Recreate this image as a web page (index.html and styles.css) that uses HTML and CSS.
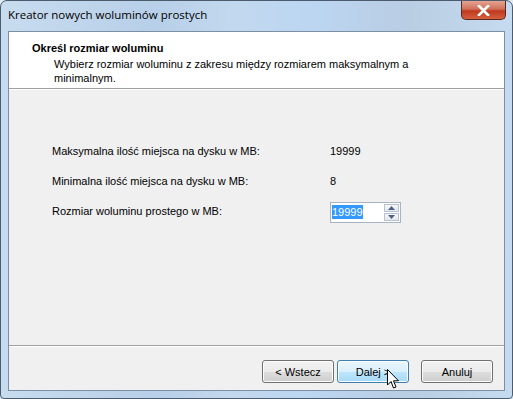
FILE: index.html
```html
<!DOCTYPE html>
<html lang="pl">
<head>
    <meta charset="UTF-8">
    <title>Kreator nowych woluminów prostych</title>
    <link rel="stylesheet" href="styles.css">
</head>
<body>
    <div class="window">
        <div class="titlebar">
            <span class="title">Kreator nowych woluminów prostych</span>
            <div class="close">
                <svg width="13" height="11" viewBox="0 0 13 11">
                    <path d="M2 1 L11 10 M11 1 L2 10" stroke="#fff" stroke-width="2.6" stroke-linecap="square"/>
                </svg>
            </div>
        </div>
        <div class="client">
            <div class="header">
                <div class="heading">Określ rozmiar woluminu</div>
                <div class="subheading">Wybierz rozmiar woluminu z zakresu między rozmiarem maksymalnym a minimalnym.</div>
            </div>
            <div class="content">
                <div class="row">
                    <span class="label">Maksymalna ilość miejsca na dysku w MB:</span>
                    <span class="value">19999</span>
                </div>
                <div class="row">
                    <span class="label">Minimalna ilość miejsca na dysku w MB:</span>
                    <span class="value">8</span>
                </div>
                <div class="row">
                    <span class="label">Rozmiar woluminu prostego w MB:</span>
                    <div class="spin">
                        <div class="spin-input"><span class="selected">19999</span></div>
                        <div class="spin-buttons">
                            <div class="spin-btn">
                                <svg width="7" height="4" viewBox="0 0 7 4"><path d="M0 4 L3.5 0 L7 4 Z" fill="#4d6185"/></svg>
                            </div>
                            <div class="spin-btn">
                                <svg width="7" height="4" viewBox="0 0 7 4"><path d="M0 0 L3.5 4 L7 0 Z" fill="#4d6185"/></svg>
                            </div>
                        </div>
                    </div>
                </div>
            </div>
            <div class="footer">
                <div class="btn">&lt; Wstecz</div>
                <div class="btn btn-hover">Dalej &gt;
                    <svg class="cursor" width="13" height="21" viewBox="0 0 13 21">
                        <path d="M0.5 0.5 L0.5 16 L4 12.5 L6.5 19 L9 18 L6.5 11.8 L11.5 11.8 Z" fill="#fff" stroke="#000" stroke-width="1"/>
                    </svg>
                </div>
                <div class="btn btn-cancel">Anuluj</div>
            </div>
        </div>
    </div>
</body>
</html>
```

FILE: styles.css
```css
body {
    margin: 0;
    padding: 0;
    background-color: #dfe9f3;
    font-family: 'Liberation Sans', Arial, sans-serif;
    font-size: 11px;
    color: #000;
}
.window {
    width: 511px;
    height: 397px;
    border: 1px solid #4d5c6d;
    border-radius: 7px 7px 4px 4px;
    background: linear-gradient(90deg, #c8dcef 0%, #b7cfe8 30%, #c2d8ee 45%, #bcd6f2 60%, #b9cde3 80%, #c6dbef 100%);
    display: flex;
    flex-direction: column;
    overflow: hidden;
}
.titlebar {
    height: 30px;
    display: flex;
    align-items: flex-start;
    justify-content: space-between;
    padding-left: 7px;
}
.title {
    font-family: 'Open Sans', sans-serif;
    font-size: 11.5px;
    margin-top: 6px;
    color: #000;
}
.close {
    width: 43px;
    height: 18px;
    margin-right: 6px;
    border: 1px solid #5a2a22;
    border-top: none;
    border-radius: 0 0 5px 5px;
    background: linear-gradient(180deg, #e5a493 0%, #d1705a 45%, #c0391f 55%, #d4603f 100%);
    display: flex;
    align-items: center;
    justify-content: center;
}
.client {
    flex: 1;
    margin: 0 7px 7px 7px;
    border: 1px solid #7d8fa3;
    background-color: #f0f0f0;
    display: flex;
    flex-direction: column;
}
.header {
    height: 57px;
    background-color: #fff;
    border-bottom: 1px solid #a0a0a0;
    box-sizing: border-box;
    padding: 9px 0 0 23px;
}
.heading {
    font-weight: 700;
    line-height: 14px;
}
.subheading {
    margin-left: 22px;
    width: 360px;
    line-height: 14px;
    margin-top: 2px;
}
.content {
    flex: 1;
    border-top: 1px solid #fff;
    padding: 51px 0 0 43px;
}
.row {
    display: flex;
    align-items: center;
    height: 20px;
    margin-bottom: 10px;
}
.label {
    width: 278px;
}
.spin {
    display: flex;
    height: 21px;
    margin-top: 2px;
}
.spin-input {
    width: 53px;
    height: 21px;
    border: 1px solid #a9b4c2;
    border-right: none;
    background-color: #fff;
    padding: 3px 0 0 1px;
    box-sizing: border-box;
}
.selected {
    background-color: #3399ff;
    color: #fff;
    padding: 1px 0;
}
.spin-buttons {
    display: flex;
    flex-direction: column;
    width: 18px;
    height: 21px;
    border: 1px solid #a9b4c2;
    border-left: none;
    background-color: #fff;
    padding: 1px;
    box-sizing: border-box;
    gap: 1px;
}
.spin-btn {
    flex: 1;
    border: 1px solid #b8c2d0;
    background: linear-gradient(180deg, #f6f7f9, #e4e7ec);
    display: flex;
    align-items: center;
    justify-content: center;
}
.footer {
    height: 45px;
    border-top: 1px solid #a0a0a0;
    box-shadow: inset 0 1px 0 #fff;
    display: flex;
    align-items: flex-start;
    padding: 14px 0 0 253px;
    box-sizing: border-box;
    gap: 3px;
}
.btn {
    position: relative;
    width: 72px;
    height: 23px;
    box-sizing: border-box;
    border: 1px solid #707070;
    border-radius: 3px;
    background: linear-gradient(180deg, #f2f2f2 0%, #ebebeb 50%, #dddddd 51%, #cfcfcf 100%);
    box-shadow: inset 0 0 0 1px #fcfcfc;
    display: flex;
    align-items: center;
    justify-content: center;
}
.btn-hover {
    border-color: #3c7fb1;
    background: linear-gradient(180deg, #eaf6fd 0%, #d9f0fc 50%, #bee6fd 51%, #a7d9f5 100%);
}
.btn-cancel {
    margin-left: 9px;
}
.cursor {
    position: absolute;
    left: 49px;
    top: 8px;
}
```
